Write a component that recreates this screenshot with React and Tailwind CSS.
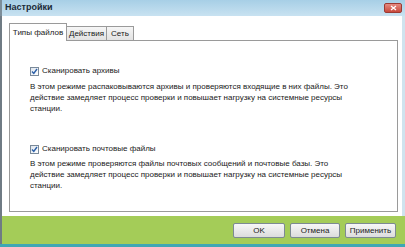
export default function App() {
  const Check = () => (
    <span className="inline-flex w-[9px] h-[9px] border border-[#7a8a9a] bg-gradient-to-br from-[#dfe6ee] to-[#ffffff] items-center justify-center mr-[3px]">
      <svg width="7" height="7" viewBox="0 0 7 7">
        <path d="M1 3.5 L2.8 5.5 L6 1" stroke="#2b5fa8" strokeWidth="1.4" fill="none" />
      </svg>
    </span>
  );
  return (
    <div className="w-[405px] h-[247px] overflow-hidden flex flex-col bg-white text-[#1a1a1a] text-[8px]" style={{ fontFamily: '"Liberation Sans", sans-serif' }}>
      <div className="h-[16px] flex items-center justify-between bg-gradient-to-b from-[#a7cfe6] to-[#c8e2f1] border-l-2 border-[#7d8e99]">
        <span className="pl-[3px] font-bold text-[9px] text-[#1b2a38]">Настройки</span>
        <div className="mr-[3px] w-[18px] h-[10px] rounded-[2px] bg-gradient-to-b from-[#e58a80] to-[#c8483c] border border-[#9c3a33] flex items-center justify-center">
          <svg width="7" height="6" viewBox="0 0 7 6"><path d="M1 1 L6 5 M6 1 L1 5" stroke="#fff" strokeWidth="1.3" /></svg>
        </div>
      </div>
      <div className="flex-1 flex border-l-2 border-[#6f7b84] border-r-[3px] border-r-[#cfe3ee]">
        <div className="flex-1 flex flex-col pl-[7px] pr-[4px] pt-[7px] pb-[4px]">
          <div className="flex items-end h-[17px]">
            <div className="h-[18px] w-[58px] border border-b-0 border-[#9a9a9a] bg-white flex items-center justify-center relative top-[1px] z-10">Типы файлов</div>
            <div className="h-[14px] w-[40px] border border-l-0 border-b-0 border-[#9a9a9a] bg-gradient-to-b from-[#f6f6f6] to-[#e2e2e2] flex items-center justify-center">Действия</div>
            <div className="h-[14px] w-[27px] border border-l-0 border-b-0 border-[#9a9a9a] bg-gradient-to-b from-[#f6f6f6] to-[#e2e2e2] flex items-center justify-center">Сеть</div>
          </div>
          <div className="flex-1 border border-[#9a9a9a] bg-white pl-[20px] pt-[25px] whitespace-nowrap">
            <div className="flex items-center h-[10px]"><Check />Сканировать архивы</div>
            <p className="mt-[5px] leading-[11px]">
              В этом режиме распаковываются архивы и проверяются входящие в них файлы. Это<br />
              действие замедляет процесс проверки и повышает нагрузку на системные ресурсы<br />
              станции.
            </p>
            <div className="flex items-center h-[10px] mt-[30px]"><Check />Сканировать почтовые файлы</div>
            <p className="mt-[4px] leading-[11px]">
              В этом режиме проверяются файлы почтовых сообщений и почтовые базы. Это<br />
              действие замедляет процесс проверки и повышает нагрузку на системные ресурсы<br />
              станции.
            </p>
          </div>
        </div>
      </div>
      <div className="h-[28px] bg-[#a4cc58] border-l-2 border-[#6f7b84] flex items-center justify-end gap-[5px] pr-[9px] pt-[1px]">
        <button className="w-[52px] h-[15px] border border-[#7d8a93] rounded-[2px] bg-gradient-to-b from-[#f7f7f7] to-[#dcdcdc] text-[8px]">OK</button>
        <button className="w-[50px] h-[15px] border border-[#7d8a93] rounded-[2px] bg-gradient-to-b from-[#f7f7f7] to-[#dcdcdc] text-[8px]">Отмена</button>
        <button className="w-[51px] h-[15px] border border-[#7d8a93] rounded-[2px] bg-gradient-to-b from-[#f7f7f7] to-[#dcdcdc] text-[8px]">Применить</button>
      </div>
      <div className="h-[3px] bg-[#3ea7b5]" />
    </div>
  );
}
